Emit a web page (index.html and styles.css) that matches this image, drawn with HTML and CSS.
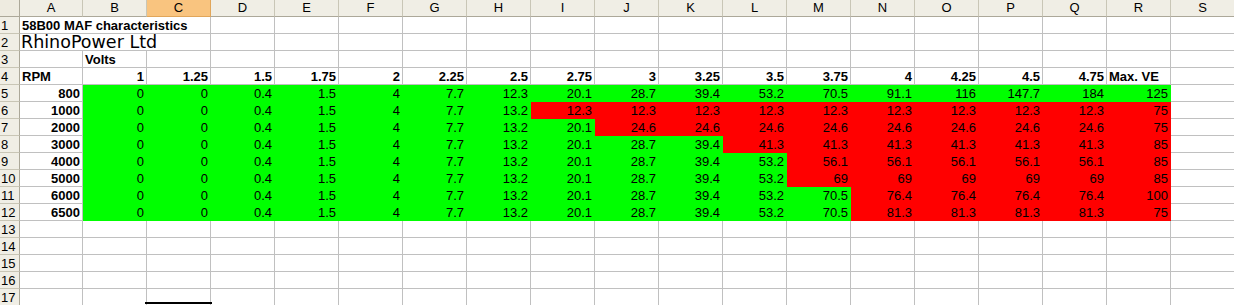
FILE: index.html
```html
<!DOCTYPE html>
<html>
<head>
<meta charset="utf-8">
<title>58B00 MAF characteristics</title>
<link rel="stylesheet" href="styles.css">
</head>
<body>
<div class="sheet">
  <div class="corner"></div>
  <div class="ch">A</div><div class="ch">B</div><div class="ch sel">C</div><div class="ch">D</div><div class="ch">E</div><div class="ch">F</div><div class="ch">G</div><div class="ch">H</div><div class="ch">I</div><div class="ch">J</div><div class="ch">K</div><div class="ch">L</div><div class="ch">M</div><div class="ch">N</div><div class="ch">O</div><div class="ch">P</div><div class="ch">Q</div><div class="ch">R</div><div class="ch">S</div>

  <div class="rh">1</div>
  <div class="c b l span3">58B00 MAF characteristics</div><div class="c"></div><div class="c"></div><div class="c"></div><div class="c"></div><div class="c"></div><div class="c"></div><div class="c"></div><div class="c"></div><div class="c"></div><div class="c"></div><div class="c"></div><div class="c"></div><div class="c"></div><div class="c"></div><div class="c"></div><div class="c"></div>

  <div class="rh">2</div>
  <div class="c l span3 title">RhinoPower Ltd</div><div class="c"></div><div class="c"></div><div class="c"></div><div class="c"></div><div class="c"></div><div class="c"></div><div class="c"></div><div class="c"></div><div class="c"></div><div class="c"></div><div class="c"></div><div class="c"></div><div class="c"></div><div class="c"></div><div class="c"></div><div class="c"></div>

  <div class="rh">3</div>
  <div class="c"></div><div class="c b l">Volts</div><div class="c"></div><div class="c"></div><div class="c"></div><div class="c"></div><div class="c"></div><div class="c"></div><div class="c"></div><div class="c"></div><div class="c"></div><div class="c"></div><div class="c"></div><div class="c"></div><div class="c"></div><div class="c"></div><div class="c"></div><div class="c"></div><div class="c"></div>

  <div class="rh">4</div>
  <div class="c b l">RPM</div><div class="c b">1</div><div class="c b">1.25</div><div class="c b">1.5</div><div class="c b">1.75</div><div class="c b">2</div><div class="c b">2.25</div><div class="c b">2.5</div><div class="c b">2.75</div><div class="c b">3</div><div class="c b">3.25</div><div class="c b">3.5</div><div class="c b">3.75</div><div class="c b">4</div><div class="c b">4.25</div><div class="c b">4.5</div><div class="c b">4.75</div><div class="c b l">Max. VE</div><div class="c"></div>

  <div class="rh">5</div>
  <div class="c b">800</div><div class="c g">0</div><div class="c g">0</div><div class="c g">0.4</div><div class="c g">1.5</div><div class="c g">4</div><div class="c g">7.7</div><div class="c g">12.3</div><div class="c g">20.1</div><div class="c g">28.7</div><div class="c g">39.4</div><div class="c g">53.2</div><div class="c g">70.5</div><div class="c g">91.1</div><div class="c g">116</div><div class="c g">147.7</div><div class="c g">184</div><div class="c g">125</div><div class="c"></div>

  <div class="rh">6</div>
  <div class="c b">1000</div><div class="c g">0</div><div class="c g">0</div><div class="c g">0.4</div><div class="c g">1.5</div><div class="c g">4</div><div class="c g">7.7</div><div class="c g">13.2</div><div class="c r">12.3</div><div class="c r">12.3</div><div class="c r">12.3</div><div class="c r">12.3</div><div class="c r">12.3</div><div class="c r">12.3</div><div class="c r">12.3</div><div class="c r">12.3</div><div class="c r">12.3</div><div class="c r">75</div><div class="c"></div>

  <div class="rh">7</div>
  <div class="c b">2000</div><div class="c g">0</div><div class="c g">0</div><div class="c g">0.4</div><div class="c g">1.5</div><div class="c g">4</div><div class="c g">7.7</div><div class="c g">13.2</div><div class="c g">20.1</div><div class="c r">24.6</div><div class="c r">24.6</div><div class="c r">24.6</div><div class="c r">24.6</div><div class="c r">24.6</div><div class="c r">24.6</div><div class="c r">24.6</div><div class="c r">24.6</div><div class="c r">75</div><div class="c"></div>

  <div class="rh">8</div>
  <div class="c b">3000</div><div class="c g">0</div><div class="c g">0</div><div class="c g">0.4</div><div class="c g">1.5</div><div class="c g">4</div><div class="c g">7.7</div><div class="c g">13.2</div><div class="c g">20.1</div><div class="c g">28.7</div><div class="c g">39.4</div><div class="c r">41.3</div><div class="c r">41.3</div><div class="c r">41.3</div><div class="c r">41.3</div><div class="c r">41.3</div><div class="c r">41.3</div><div class="c r">85</div><div class="c"></div>

  <div class="rh">9</div>
  <div class="c b">4000</div><div class="c g">0</div><div class="c g">0</div><div class="c g">0.4</div><div class="c g">1.5</div><div class="c g">4</div><div class="c g">7.7</div><div class="c g">13.2</div><div class="c g">20.1</div><div class="c g">28.7</div><div class="c g">39.4</div><div class="c g">53.2</div><div class="c r">56.1</div><div class="c r">56.1</div><div class="c r">56.1</div><div class="c r">56.1</div><div class="c r">56.1</div><div class="c r">85</div><div class="c"></div>

  <div class="rh">10</div>
  <div class="c b">5000</div><div class="c g">0</div><div class="c g">0</div><div class="c g">0.4</div><div class="c g">1.5</div><div class="c g">4</div><div class="c g">7.7</div><div class="c g">13.2</div><div class="c g">20.1</div><div class="c g">28.7</div><div class="c g">39.4</div><div class="c g">53.2</div><div class="c r">69</div><div class="c r">69</div><div class="c r">69</div><div class="c r">69</div><div class="c r">69</div><div class="c r">85</div><div class="c"></div>

  <div class="rh">11</div>
  <div class="c b">6000</div><div class="c g">0</div><div class="c g">0</div><div class="c g">0.4</div><div class="c g">1.5</div><div class="c g">4</div><div class="c g">7.7</div><div class="c g">13.2</div><div class="c g">20.1</div><div class="c g">28.7</div><div class="c g">39.4</div><div class="c g">53.2</div><div class="c g">70.5</div><div class="c r">76.4</div><div class="c r">76.4</div><div class="c r">76.4</div><div class="c r">76.4</div><div class="c r">100</div><div class="c"></div>

  <div class="rh">12</div>
  <div class="c b">6500</div><div class="c g">0</div><div class="c g">0</div><div class="c g">0.4</div><div class="c g">1.5</div><div class="c g">4</div><div class="c g">7.7</div><div class="c g">13.2</div><div class="c g">20.1</div><div class="c g">28.7</div><div class="c g">39.4</div><div class="c g">53.2</div><div class="c g">70.5</div><div class="c r">81.3</div><div class="c r">81.3</div><div class="c r">81.3</div><div class="c r">81.3</div><div class="c r">75</div><div class="c"></div>

  <div class="rh">13</div>
  <div class="c"></div><div class="c"></div><div class="c"></div><div class="c"></div><div class="c"></div><div class="c"></div><div class="c"></div><div class="c"></div><div class="c"></div><div class="c"></div><div class="c"></div><div class="c"></div><div class="c"></div><div class="c"></div><div class="c"></div><div class="c"></div><div class="c"></div><div class="c"></div><div class="c"></div>

  <div class="rh">14</div>
  <div class="c"></div><div class="c"></div><div class="c"></div><div class="c"></div><div class="c"></div><div class="c"></div><div class="c"></div><div class="c"></div><div class="c"></div><div class="c"></div><div class="c"></div><div class="c"></div><div class="c"></div><div class="c"></div><div class="c"></div><div class="c"></div><div class="c"></div><div class="c"></div><div class="c"></div>

  <div class="rh">15</div>
  <div class="c"></div><div class="c"></div><div class="c"></div><div class="c"></div><div class="c"></div><div class="c"></div><div class="c"></div><div class="c"></div><div class="c"></div><div class="c"></div><div class="c"></div><div class="c"></div><div class="c"></div><div class="c"></div><div class="c"></div><div class="c"></div><div class="c"></div><div class="c"></div><div class="c"></div>

  <div class="rh">16</div>
  <div class="c"></div><div class="c"></div><div class="c"></div><div class="c"></div><div class="c"></div><div class="c"></div><div class="c"></div><div class="c"></div><div class="c"></div><div class="c"></div><div class="c"></div><div class="c"></div><div class="c"></div><div class="c"></div><div class="c"></div><div class="c"></div><div class="c"></div><div class="c"></div><div class="c"></div>

  <div class="rh">17</div>
  <div class="c"></div><div class="c"></div><div class="c active"></div><div class="c"></div><div class="c"></div><div class="c"></div><div class="c"></div><div class="c"></div><div class="c"></div><div class="c"></div><div class="c"></div><div class="c"></div><div class="c"></div><div class="c"></div><div class="c"></div><div class="c"></div><div class="c"></div><div class="c"></div><div class="c"></div>
</div>
</body>
</html>
```

FILE: styles.css
```css
html, body {
  margin: 0;
  padding: 0;
  background: #ffffff;
  overflow: hidden;
}

.sheet {
  display: grid;
  grid-template-columns: 20px 63px repeat(18, 64px);
  grid-template-rows: 17px;
  grid-auto-rows: 17px;
  font-family: "Liberation Sans", Arial, sans-serif;
  font-size: 13px;
  color: #000;
}

.corner {
  background: #eeebe0;
  border-right: 1px solid #aca899;
  border-bottom: 1px solid #aca899;
}

.ch {
  box-sizing: border-box;
  background: #f0eee5;
  border-right: 1px solid #c9c6b6;
  border-bottom: 1px solid #aca899;
  text-align: center;
  line-height: 16px;
  font-size: 13px;
  color: #000;
}

.ch.sel {
  background: #f9c47f;
  border-right-color: #e1a65a;
  border-bottom-color: #e1a65a;
}

.rh {
  box-sizing: border-box;
  background: #f0eee5;
  border-right: 1px solid #aca899;
  border-bottom: 1px solid #c9c6b6;
  text-align: left;
  padding-left: 1px;
  line-height: 17px;
  font-size: 13px;
  white-space: nowrap;
  overflow: hidden;
}

.c {
  box-sizing: border-box;
  border-right: 1px solid #c0c0c0;
  border-bottom: 1px solid #c0c0c0;
  padding: 0 2px;
  text-align: right;
  line-height: 17px;
  white-space: nowrap;
  position: relative;
}

.c.l {
  text-align: left;
}

.c.b {
  font-weight: bold;
}

.c.span3 {
  grid-column: span 3;
}

.c.title {
  font-family: "DejaVu Sans", Verdana, sans-serif;
  font-size: 17.5px;
  font-weight: normal;
  line-height: 16px;
  padding-left: 1px;
}

.c.g {
  background: #00ff00;
  border-color: transparent;
}

.c.r {
  background: #ff0000;
  border-color: transparent;
}

.c.active::after {
  content: "";
  position: absolute;
  left: -2px;
  right: -2px;
  bottom: 1px;
  height: 2px;
  background: #000;
}
```
